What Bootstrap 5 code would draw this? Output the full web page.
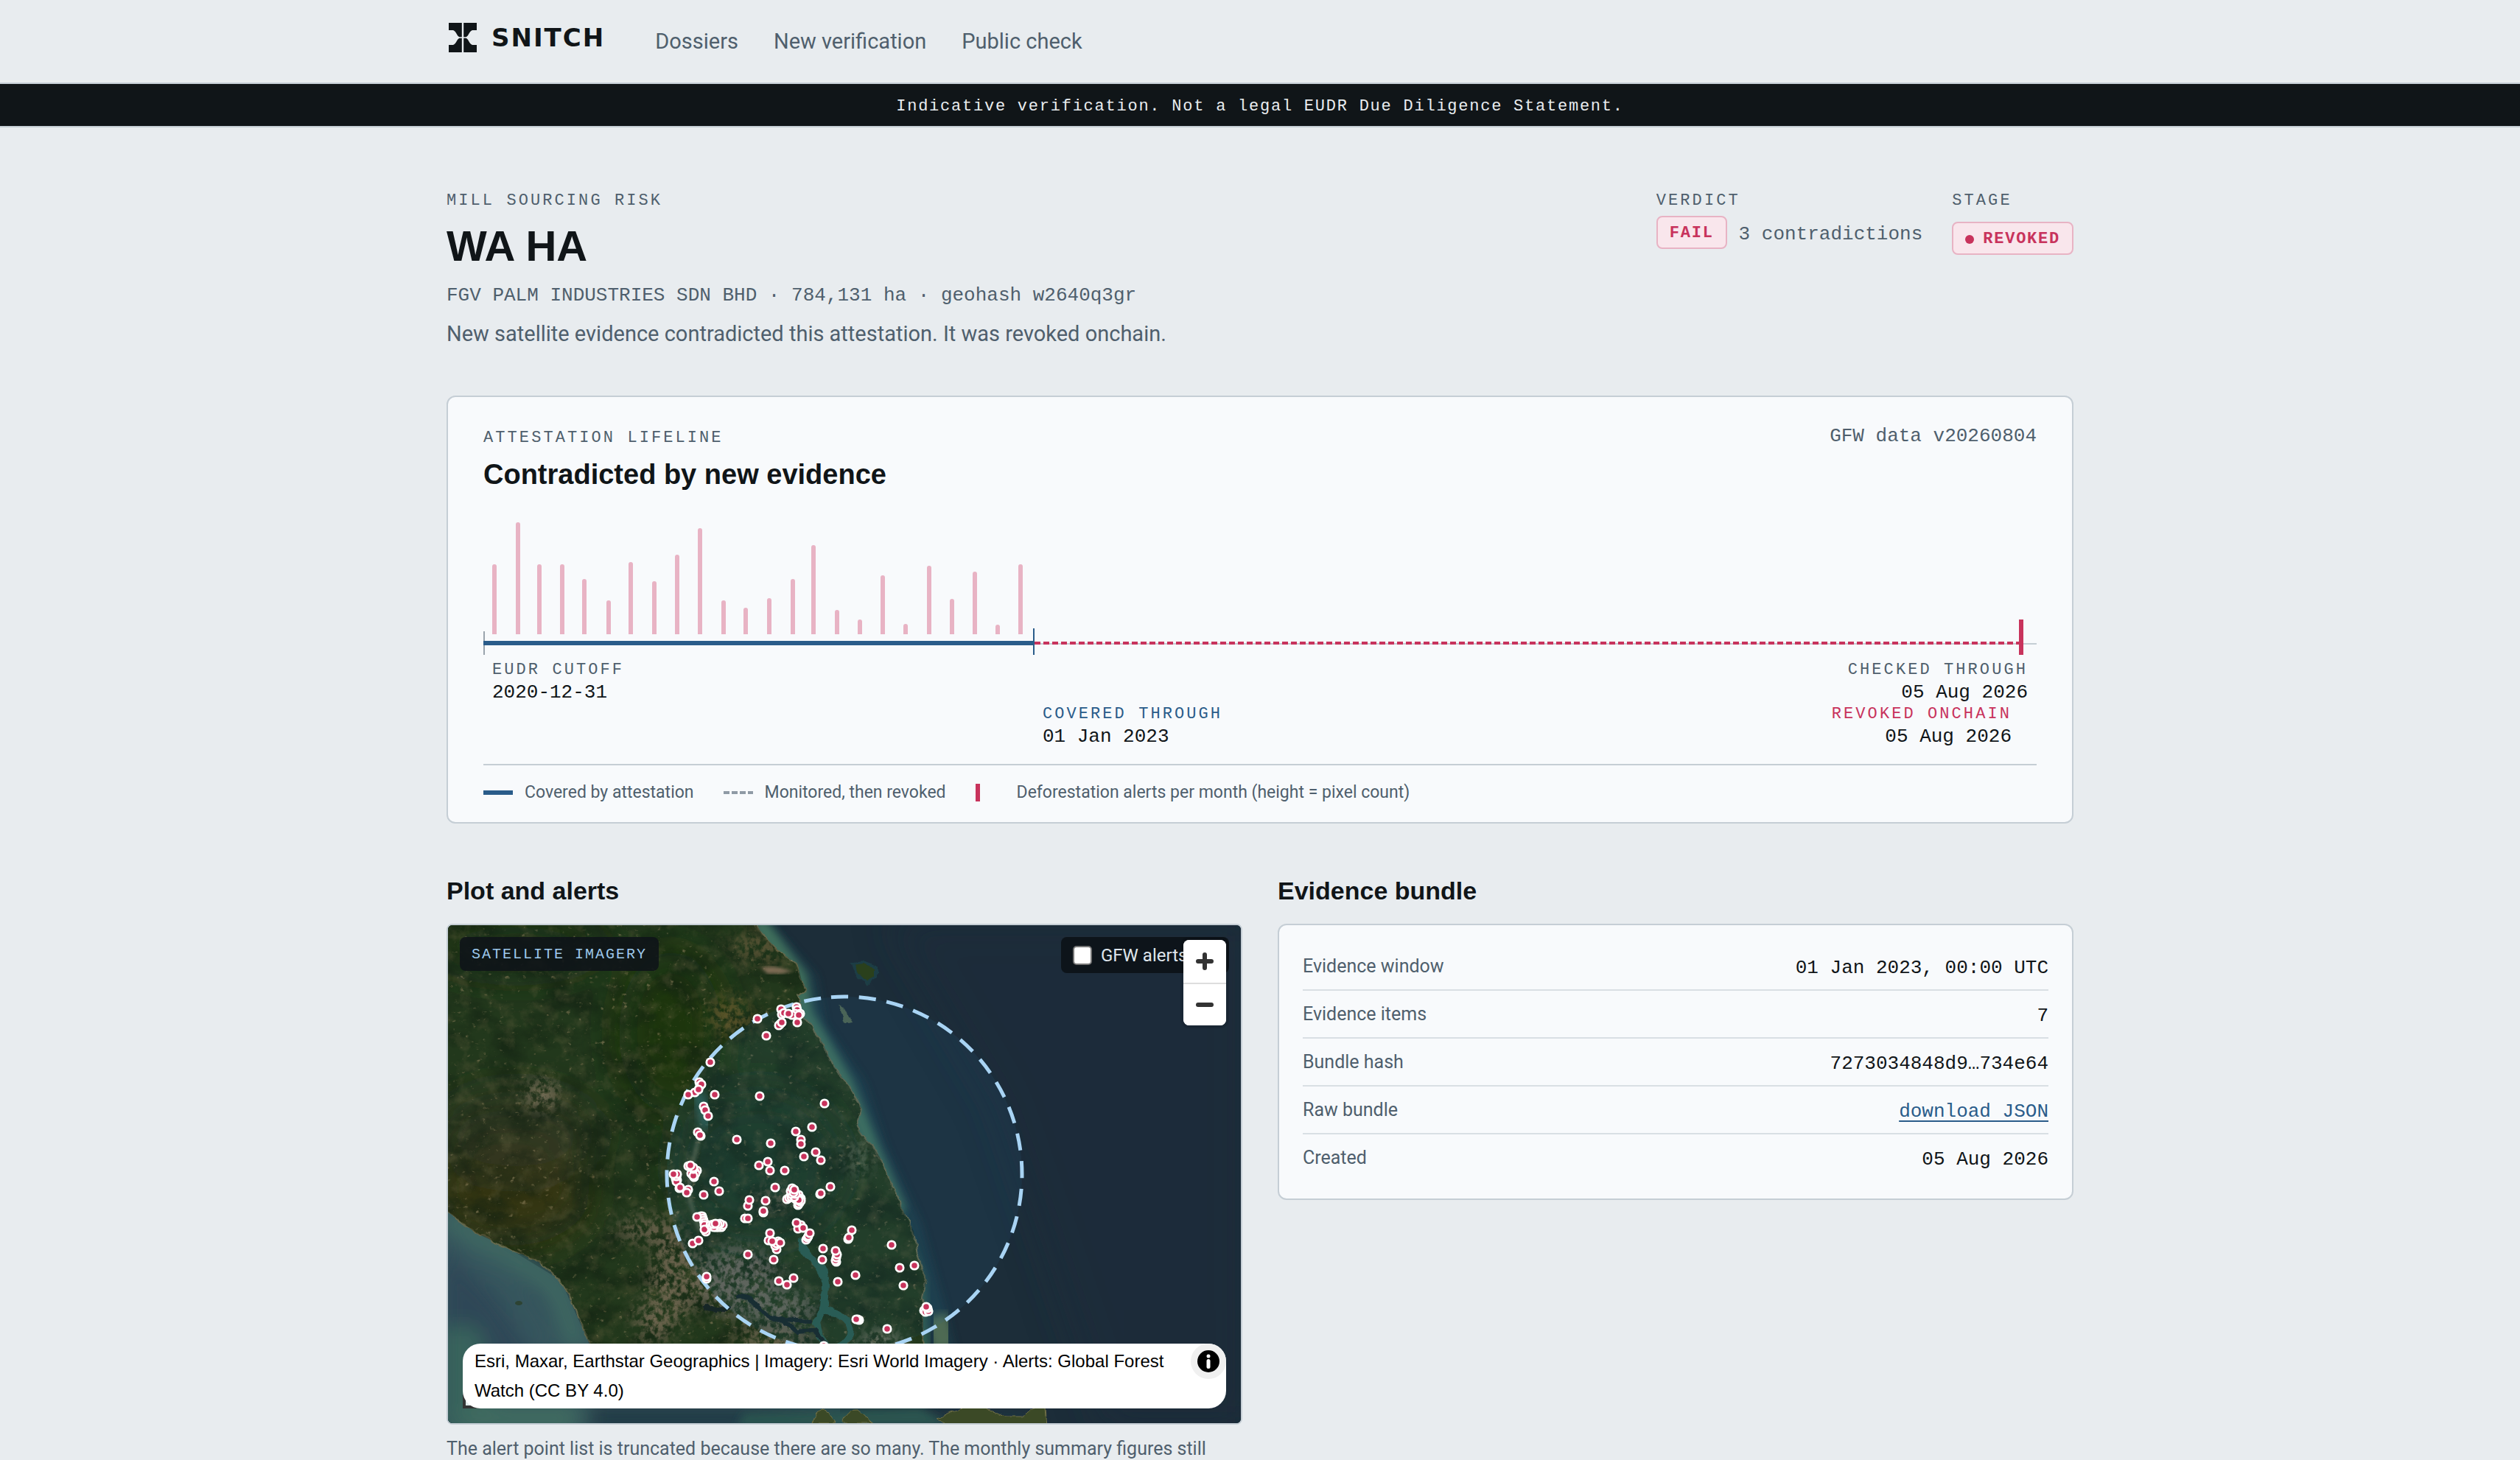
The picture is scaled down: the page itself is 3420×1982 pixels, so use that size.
<!DOCTYPE html>
<html lang="en">
<head>
<meta charset="utf-8">
<meta name="viewport" content="width=device-width, initial-scale=1">
<title>WA HA – Snitch</title>
<link href="https://cdn.jsdelivr.net/npm/bootstrap@5.3.0/dist/css/bootstrap.min.css" rel="stylesheet">
<style>
:root{--ink:#101518;--muted-ink:#4f5f6d;--line:#c5ced5;--paper:#f8fafc;--blue:#2a5c8a;--red:#c8335c;--pink:#e8b3c4;--blush:#f9e6ec}
body{background:#e8ecef;color:var(--ink);font-family:Roboto,"Open Sans",sans-serif;font-size:29px;line-height:44px;overflow-x:hidden}
.page-wrap{max-width:2304px;padding-left:48px;padding-right:48px}
.mono{font-family:"Liberation Mono","DejaVu Sans Mono",monospace;font-size:26px;line-height:26px;padding-top:4px}
.tag-label{font-family:"Liberation Mono","DejaVu Sans Mono",monospace;font-size:22px;line-height:32px;padding-top:4px;letter-spacing:.14em;text-transform:uppercase;color:var(--muted-ink)}
.soft{color:var(--muted-ink)}
h1,h2,.h-card{font-family:"Liberation Sans",Arial,sans-serif;font-weight:700}
.site-head{border-bottom:2px solid var(--line);height:114px;--bs-navbar-padding-y:0}
.site-brand{display:flex;align-items:center;gap:20px;padding:0 0 10px;margin-right:68px;font-family:"DejaVu Sans",sans-serif;font-weight:700;font-size:34px;line-height:44px;letter-spacing:2px;color:var(--ink)}
.site-brand svg{width:38px;height:40px;margin-left:3px}
.site-nav{gap:48px}
.site-nav .nav-link{padding:0!important;color:var(--muted-ink);font-size:29px}
.notice{background:var(--ink);color:#e8ecef;border-bottom:2px solid var(--line);font-family:"Liberation Mono",monospace;font-size:22px;line-height:53px;padding-top:4px;letter-spacing:.08em}
main{padding-top:80px}
h1{font-size:58px;line-height:66px;margin:12px 0}
.firm{line-height:36px;margin-bottom:12px}
.verdicts{gap:40px}
.chip{display:inline-flex;align-items:center;gap:12px;height:45px;padding:2px 16px 0;border:2px solid var(--pink);border-radius:8px;background:var(--blush);color:var(--red);font-family:"Liberation Mono",monospace;font-weight:700;font-size:22px;letter-spacing:.08em}
.chip i{width:12px;height:12px;border-radius:50%;background:var(--red)}
.panel{background:var(--paper);border:2px solid var(--line);border-radius:12px}
.life{margin-top:62px;padding:36px 48px 22px}
.h-card{font-size:38px;line-height:48px;margin:9px 0 30px}
.life svg{display:block;width:100%;height:auto}
.ticks{padding-top:4px}
.ticks .tag-label{line-height:26px}
.tick-row{padding:0 12px}
.tick-row.lower{padding:0 34px 0 36%}
.tag-label.is-blue{color:var(--blue)}
.tag-label.is-red{color:var(--red)}
.legend-row{border-top:2px solid var(--line);margin-top:24px;padding-top:19px;gap:40px;font-size:23px;line-height:36px}
.legend-row span{display:flex;align-items:center;gap:16px}
.legend-row i{width:40px;display:block}
.k-blue{height:6px;background:var(--blue)}
.k-dash{height:4px;background:repeating-linear-gradient(90deg,#8f9aa5 0 8px,transparent 8px 11px)}
.k-bar{height:24px;background:linear-gradient(var(--red),var(--red)) left/6px 100% no-repeat}
.cols{--bs-gutter-x:48px;margin-top:69px}
h2{font-size:34px;line-height:44px;margin-bottom:23px}
.map-box{position:relative;height:680px;border:2px solid var(--line);border-radius:8px;overflow:hidden;background:#1c2e3a}
.map-box>svg{position:absolute;inset:0;width:100%;height:100%}
.map-tag{position:absolute;left:16px;top:16px;padding:2px 16px 0;border-radius:8px;background:rgba(14,20,24,.9);color:#9ec9ec;font-family:"Liberation Mono",monospace;font-size:20px;line-height:44px;letter-spacing:.1em}
.map-toggle{position:absolute;right:16px;top:16px;width:228px;height:49px;padding-left:16px;gap:12px;border-radius:8px;background:rgba(12,18,24,.92);color:#dfe6ec;font-size:24px}
.map-toggle input{appearance:none;width:26px;height:26px;border:2px solid #767676;border-radius:5px;background:#fff}
.zoomer{position:absolute;right:20px;top:20px;width:58px;border-radius:8px;overflow:hidden;background:#fff;box-shadow:0 0 0 4px rgba(0,0,0,.1)}
.zoomer button{display:block;width:58px;height:58px;border:0;background:#fff;padding:0}
.zoomer button+button{border-top:2px solid #ddd}
.zoomer svg{width:24px;height:24px;display:block;margin:auto}
.scale-corner{position:absolute;left:20px;bottom:20px;width:60px;height:20px;background:#dfe8e8;border:solid #333;border-width:0 0 4px 4px}
.credit{position:absolute;left:20px;right:20px;bottom:20px;padding:4px 80px 4px 16px;border-radius:24px;background:#fff;color:#000;font-family:"Liberation Sans",Arial,sans-serif;font-size:24px;line-height:40px}
.credit button{position:absolute;right:0;top:0;width:48px;height:48px;border:0;border-radius:50%;background:#f0f0f0;padding:9px}
.credit button svg{display:block;width:30px;height:30px}
.caption{font-size:25px;line-height:36px;margin-top:15px}
.facts{padding:24px 32px;margin:0}
.facts div{height:65px;border-bottom:2px solid #d9dfe4}
.facts div:last-child{border:0;height:63px}
.facts dt{font-weight:400;font-size:25px}
.facts dd{margin:0}
.facts a{color:var(--blue);text-decoration-thickness:2px;text-underline-offset:5px}
</style>
<script defer src="https://cdn.jsdelivr.net/npm/bootstrap@5.3.0/dist/js/bootstrap.bundle.min.js"></script>
</head>
<body>
<header class="navbar site-head">
  <div class="container-fluid page-wrap justify-content-start">
    <a class="navbar-brand site-brand" href="#">
      <svg viewBox="0 0 38 40" fill="#101518" aria-hidden="true"><path d="M0 0H17.8V19.2H14.5C11 18 10 11 6 10H0ZM20.2 0H38V10H32C28 11 27 18 23.500 19.200H20.200ZM0 40H17.800V20.800H14.500C11 22 10 29 6 30H0ZM20.200 40H38V30H32C28 29 27 22 23.500 20.800H20.200Z"/></svg>
      SNITCH</a>
    <nav class="nav site-nav">
      <a class="nav-link" href="#">Dossiers</a>
      <a class="nav-link" href="#">New verification</a>
      <a class="nav-link" href="#">Public check</a>
    </nav>
  </div>
</header>
<div class="notice text-center">Indicative verification. Not a legal EUDR Due Diligence Statement.</div>

<main class="container-fluid page-wrap">
  <section class="d-flex justify-content-between">
    <div>
      <div class="tag-label">Mill sourcing risk</div>
      <h1>WA HA</h1>
      <div class="mono soft firm">FGV PALM INDUSTRIES SDN BHD · 784,131 ha · geohash w2640q3gr</div>
      <p class="soft mb-0">New satellite evidence contradicted this attestation. It was revoked onchain.</p>
    </div>
    <div class="d-flex verdicts">
      <div>
        <div class="tag-label">Verdict</div>
        <div class="d-flex align-items-center gap-3 pt-1"><span class="chip">FAIL</span><span class="mono soft">3 contradictions</span></div>
      </div>
      <div>
        <div class="tag-label mb-2">Stage</div>
        <span class="chip mt-1"><i></i>REVOKED</span>
      </div>
    </div>
  </section>

  <section class="panel life">
    <div class="d-flex justify-content-between">
      <div class="tag-label">Attestation lifeline</div>
      <div class="mono soft">GFW data v20260804</div>
    </div>
    <div class="h-card">Contradicted by new evidence</div>
    <svg viewBox="0 0 2108 191" role="img" aria-label="Monthly alerts and attestation coverage">
      <g id="bars" fill="#e8b3c4"></g>
      <rect y="175" width="2108" height="2" fill="#c5ced5"/>
      <rect y="159" width="2" height="32" fill="#9aa4ad"/>
      <rect y="172" width="747" height="6" fill="#2a5c8a"/>
      <path d="M748 175H2087" stroke="#c8335c" stroke-width="4" stroke-dasharray="8 4"/>
      <rect x="746" y="155" width="2" height="36" fill="#2a5c8a"/>
      <rect x="2084" y="143" width="6" height="48" fill="#c8335c"/>
    </svg>
    <div class="ticks">
      <div class="d-flex justify-content-between tick-row">
        <div><div class="tag-label">EUDR cutoff</div><div class="mono">2020-12-31</div></div>
        <div class="text-end"><div class="tag-label">Checked through</div><div class="mono">05 Aug 2026</div></div>
      </div>
      <div class="d-flex justify-content-between tick-row lower">
        <div><div class="tag-label is-blue">Covered through</div><div class="mono">01 Jan 2023</div></div>
        <div class="text-end"><div class="tag-label is-red">Revoked onchain</div><div class="mono">05 Aug 2026</div></div>
      </div>
    </div>
    <div class="d-flex legend-row soft">
      <span><i class="k-blue"></i>Covered by attestation</span>
      <span><i class="k-dash"></i>Monitored, then revoked</span>
      <span><i class="k-bar"></i>Deforestation alerts per month (height = pixel count)</span>
    </div>
  </section>

  <section class="row cols">
    <div class="col-6">
      <h2>Plot and alerts</h2>
      <div class="map-box">
        <svg viewBox="608 1255 1076 676" preserveAspectRatio="xMidYMid slice" role="img" aria-label="Satellite map with alert points">
          <defs>
            <filter id="blur2"><feGaussianBlur stdDeviation="2"/></filter>
            <filter id="blur6" x="-20%" y="-20%" width="140%" height="140%"><feGaussianBlur stdDeviation="6"/></filter>
            <filter id="blur14" x="-30%" y="-30%" width="160%" height="160%"><feGaussianBlur stdDeviation="14"/></filter>
            <filter id="blur30" x="-50%" y="-50%" width="200%" height="200%"><feGaussianBlur stdDeviation="26"/></filter>
            <filter id="rough" x="-5%" y="-5%" width="110%" height="110%"><feTurbulence type="fractalNoise" baseFrequency=".06" numOctaves="3" seed="4"/><feDisplacementMap in="SourceGraphic" scale="9" xChannelSelector="R" yChannelSelector="G"/></filter>
            <filter id="dark" x="0" y="0" width="100%" height="100%" color-interpolation-filters="sRGB"><feTurbulence type="fractalNoise" baseFrequency=".018 .024" numOctaves="6" seed="7"/><feColorMatrix values="0 0 0 0 .07  0 0 0 0 .13  0 0 0 0 .07  3 0 0 0 -1.250"/></filter>
            <filter id="tan" x="0" y="0" width="100%" height="100%" color-interpolation-filters="sRGB"><feTurbulence type="fractalNoise" baseFrequency=".05" numOctaves="6" seed="21"/><feColorMatrix values="0 0 0 0 .38  0 0 0 0 .37  0 0 0 0 .24  0 3 0 0 -1.500"/></filter>
            <filter id="speck" x="0" y="0" width="100%" height="100%" color-interpolation-filters="sRGB"><feTurbulence type="fractalNoise" baseFrequency=".13 .17" numOctaves="4" seed="35"/><feColorMatrix values=".25 0 0 0 .42  .25 0 0 0 .36  .25 0 0 0 .22  0 3 4 0 -4.400"/></filter>
            <filter id="town" x="-30%" y="-30%" width="160%" height="160%" color-interpolation-filters="sRGB"><feGaussianBlur in="SourceGraphic" stdDeviation="12" result="b"/><feTurbulence type="fractalNoise" baseFrequency=".13 .11" numOctaves="5" seed="11"/><feColorMatrix values="0 0 0 0 0 0 0 0 0 0 0 0 0 0 0 0 4 0 0 -1.500" result="n"/><feComposite in="b" in2="n" operator="in"/></filter>
            <path id="landShape" d="M600 1245H1020L1035 1268 1057 1290 1082 1307 1088 1330 1095 1343 1082 1350 1091 1380 1114 1410 1129 1443 1157 1480 1169 1503 1162 1525 1170 1542 1183 1553 1194 1570 1208 1600 1224 1640 1240 1670 1245 1703 1258 1737 1252 1760 1254 1840H806L800 1823 793 1807 779 1770 761 1737 732 1713 689 1693 646 1673 600 1638Z"/>
            <clipPath id="landClip"><use href="#landShape"/></clipPath>
          </defs>
          <rect x="600" y="1245" width="1100" height="700" fill="#1c2d39"/>
          <path d="M1200 1245L1700 1245V1940H1500L1350 1500Z" fill="#1b2b3b" opacity=".5" filter="url(#blur30)"/>
          <g fill="none" stroke-linejoin="round">
            <path d="M1035 1262L1094 1330 1105 1395 1160 1475 1188 1560 1236 1665 1268 1780 1285 1850" stroke="#1c3f4c" stroke-width="30" filter="url(#blur6)" opacity=".7"/>
            <path d="M1028 1250L1084 1325 1092 1375 1147 1470 1177 1545 1220 1645" stroke="#3f705c" stroke-width="22" filter="url(#blur6)"/>
            <path d="M1210 1640L1246 1737 1254 1840" stroke="#33604f" stroke-width="18" filter="url(#blur6)"/>
            <path d="M1270 1785L1284 1830" stroke="#5f7a58" stroke-width="34" filter="url(#blur6)" opacity=".75"/>
          </g>
          <path d="M600 1638L689 1693 761 1737 800 1823 1140 1840V1940H600Z" fill="#34525b"/>
          <g filter="url(#blur14)">
            <path d="M600 1650L690 1700 755 1745 785 1830" fill="none" stroke="#426f64" stroke-width="22"/>
            <path d="M600 1690L670 1760 730 1850H600Z" fill="#2f4656"/>
            <path d="M620 1690L690 1740 740 1830" fill="none" stroke="#38595f" stroke-width="18"/>
            <path d="M600 1800H650L680 1940H600Z" fill="#37635b"/>
            <path d="M640 1905H790L780 1945H620Z" fill="#416c61"/>
            <path d="M800 1905H1000L1400 1925V1945H800Z" fill="#213b44"/>
          </g>
          <path d="M1010 1918L1250 1910 1290 1935H1000Z" fill="#2b5450" filter="url(#blur6)"/>
          <g filter="url(#rough)">
            <use href="#landShape" fill="#24381c" stroke="#66694d" stroke-width="2"/>
            <path d="M1158 1309L1172 1307 1188 1313 1188 1325 1175 1334 1162 1321Z" fill="#2c3f1c" stroke="#1c3e44" stroke-width="4"/>
            <path d="M1139 1361L1145 1365 1155 1386 1147 1388Z" fill="#4f6350"/>
            <path d="M1102 1931Q1107 1914 1120 1912L1134 1931ZM1143 1931Q1150 1912 1165 1914L1186 1931ZM1270 1924L1305 1912 1325 1906 1362 1922 1390 1922 1400 1910 1418 1910 1420 1935H1290Z" fill="#3a4a26" stroke="#716f46" stroke-width="1"/>
          </g>
          <ellipse cx="704" cy="1768" rx="5" ry="3" fill="#2d4333"/>
          <g clip-path="url(#landClip)">
            <g filter="url(#blur30)">
              <ellipse cx="690" cy="1620" rx="110" ry="70" fill="#383614" opacity=".8"/>
              <ellipse cx="700" cy="1540" rx="110" ry="60" fill="#343822" opacity=".7"/>
              <ellipse cx="910" cy="1400" rx="70" ry="110" fill="#1d350f"/>
              <ellipse cx="1030" cy="1580" rx="110" ry="100" fill="#1f3923"/>
              <ellipse cx="700" cy="1280" rx="120" ry="40" fill="#1f3314"/>
            </g>
            <rect x="600" y="1245" width="700" height="600" filter="url(#dark)" opacity=".6"/>
            <rect x="600" y="1245" width="700" height="600" filter="url(#tan)" opacity=".35"/>
            <rect x="600" y="1245" width="700" height="600" filter="url(#speck)" opacity=".55"/>
            <g filter="url(#town)" fill="#796c57" opacity=".8">
              <ellipse cx="1000" cy="1738" rx="58" ry="48" fill="#787066"/>
              <ellipse cx="915" cy="1735" rx="36" ry="60"/>
              <ellipse cx="1060" cy="1775" rx="50" ry="25" fill="#746f64"/>
              <ellipse cx="880" cy="1668" rx="48" ry="18"/>
              <ellipse cx="735" cy="1485" rx="24" ry="22" fill="#8d7e68"/>
              <ellipse cx="1050" cy="1818" rx="60" ry="18"/>
              <ellipse cx="890" cy="1790" rx="30" ry="34"/>
              <ellipse cx="1165" cy="1570" rx="18" ry="24" fill="#606a52"/>
              <ellipse cx="1195" cy="1822" rx="28" ry="14" fill="#a99d8b"/>
              <ellipse cx="1050" cy="1625" rx="26" ry="14"/>
              <ellipse cx="990" cy="1378" rx="32" ry="26" fill="#6a5d30"/>
              <ellipse cx="1030" cy="1285" rx="40" ry="20" fill="#675c3c"/>
            </g>
            <path d="M1033 1312L1052 1311 1076 1317 1062 1321 1041 1321Z" fill="#9b7f68" opacity=".75" filter="url(#blur2)"/>
            <path d="M945 1480Q955 1500 958 1530" fill="none" stroke="#2f5e52" stroke-width="16" filter="url(#blur6)"/>
            <path d="M948 1545Q940 1575 936 1600T950 1670" fill="none" stroke="#7d8069" stroke-width="5" opacity=".5" filter="url(#blur2)"/>
            <g fill="none" stroke-linecap="round" stroke-linejoin="round" filter="url(#rough)">
              <path d="M1087 1685Q1090 1700 1105 1710T1120 1747L1118 1773 1108 1795 1112 1812 1125 1830M1120 1778Q1150 1785 1154 1800T1138 1828" stroke="#2c5a4d" stroke-width="10"/>
              <path d="M957 1773L972 1779 989 1772M1001 1760Q1020 1760 1034 1777T1061 1790L1082 1808 1105 1806 1118 1820M1062 1790L1100 1792" stroke="#182528" stroke-width="6"/>
            </g>
          </g>
          <circle cx="1146" cy="1593" r="241" fill="#266c98" fill-opacity=".12"/>
          <circle cx="1146" cy="1593" r="241" fill="none" stroke="#a9d4f4" stroke-width="5" stroke-dasharray="23.200 14.660" transform="rotate(-94.300 1146 1593)"/>
          <g id="alerts" fill="#c8335c" stroke="#fff" stroke-width="2.800"></g>
        </svg>
        <div class="map-tag">SATELLITE IMAGERY</div>
        <label class="map-toggle d-flex align-items-center"><input type="checkbox">GFW alerts</label>
        <div class="zoomer">
          <button type="button" aria-label="Zoom in"><svg viewBox="0 0 24 24" stroke="#333" stroke-width="6" stroke-linecap="round"><path d="M12 3V21M3 12H21"/></svg></button>
          <button type="button" aria-label="Zoom out"><svg viewBox="0 0 24 24" stroke="#333" stroke-width="6" stroke-linecap="round"><path d="M3 12H21"/></svg></button>
        </div>
        <div class="scale-corner"></div>
        <div class="credit">Esri, Maxar, Earthstar Geographics | Imagery: Esri World Imagery · Alerts: Global Forest Watch (CC BY 4.0)
          <button type="button" aria-label="Toggle attribution"><svg viewBox="0 0 30 30"><circle cx="15" cy="15" r="15"/><circle cx="15" cy="8" r="2.500" fill="#fff"/><path d="M15 14.500V22.500" stroke="#fff" stroke-width="5" stroke-linecap="round"/></svg></button>
        </div>
      </div>
      <p class="caption soft mb-0">The alert point list is truncated because there are so many. The monthly summary figures still</p>
    </div>
    <div class="col-6">
      <h2>Evidence bundle</h2>
      <dl class="panel facts">
        <div class="d-flex justify-content-between align-items-center"><dt class="soft">Evidence window</dt><dd class="mono">01 Jan 2023, 00:00 UTC</dd></div>
        <div class="d-flex justify-content-between align-items-center"><dt class="soft">Evidence items</dt><dd class="mono">7</dd></div>
        <div class="d-flex justify-content-between align-items-center"><dt class="soft">Bundle hash</dt><dd class="mono">7273034848d9…734e64</dd></div>
        <div class="d-flex justify-content-between align-items-center"><dt class="soft">Raw bundle</dt><dd class="mono"><a href="#">download JSON</a></dd></div>
        <div class="d-flex justify-content-between align-items-center"><dt class="soft">Created</dt><dd class="mono">05 Aug 2026</dd></div>
      </dl>
    </div>
  </section>
</main>
<script>
// monthly alert bars: [x, height]
const months=[[15,95],[47,152],[76,95],[107,95],[137,75],[170,46],[200,98],[232,72],[263,108],[294,144],[326,46],[356,36],[388,49],[420,75],[448,121],[480,33],[511,20],[542,80],[573,14],[605,93],[636,48],[667,85],[698,13],[729,95]];
document.getElementById('bars').innerHTML=months.map(([x,h])=>`<path d="M${x-3} 163V${163-h+3}q0-3 3-3t3 3V163Z"/>`).join('');
// alert pins on the map canvas
const pins=`1028,1382 1040,1405 1060,1369 1081,1366 1082,1370 1061,1376 1086,1375 1079,1375 1075,1377 1064,1374 1084,1377 1070,1375 1059,1389 1057,1391 1061,1387 1082,1387
964,1441 949,1468 950,1473 952,1471 943,1482 948,1478 934,1485 970,1485 1031,1487 1119,1497 955,1501 957,1506 961,1514 947,1536 951,1541 950,1540 1000,1546 1046,1551 1102,1529 1080,1535 1087,1546 1087,1552 1091,1569 1107,1563 1114,1574 1042,1576 1030,1581
942,1597 940,1594 946,1588 943,1590 938,1592 944,1592 941,1595 941,1586 934,1582 941,1584 937,1581 919,1601 917,1599 918,1603 918,1596 919,1593 914,1593 922,1612 923,1611 934,1614 932,1618 955,1621 969,1603 976,1616 1045,1588 1065,1588 1052,1611 1015,1636 1017,1628 1039,1629 1036,1645 1036,1643 1011,1653 1015,1653
1068,1627 1071,1625 1074,1624 1084,1621 1087,1626 1086,1628 1083,1635 1085,1632 1083,1630 1080,1627 1084,1633 1086,1630 1082,1628 1087,1629 1084,1628 1078,1624 1074,1620 1080,1620 1073,1616 1077,1618 1075,1612 1078,1614 1113,1620 1114,1619 1127,1610
951,1650 953,1650 954,1653 955,1656 956,1659 956,1662 958,1671 956,1668 964,1662 966,1664 975,1665 972,1665 979,1665 981,1662 977,1660 974,1664 969,1665 968,1661 974,1661 971,1660 946,1651 940,1687 948,1683 1015,1702 959,1735 959,1732
1087,1662 1083,1667 1081,1659 1090,1666 1094,1682 1096,1679 1097,1677 1099,1673 1043,1683 1045,1673 1054,1695 1052,1690 1056,1684 1054,1687 1048,1684 1059,1686 1050,1709 1117,1694 1116,1709 1135,1712 1134,1710 1135,1706 1136,1702 1134,1697 1057,1738 1068,1743 1077,1734 1137,1739
1156,1669 1151,1681 1152,1679 1161,1730 1210,1689 1221,1720 1241,1717 1226,1744 1254,1778 1256,1780 1260,1779 1259,1775 1257,1773 1166,1791 1164,1790 1162,1790 1204,1803 1118,1826`.split(/\s+/);
document.getElementById('alerts').innerHTML=pins.map(p=>{const[x,y]=p.split(',');return`<circle cx="${x}" cy="${y}" r="5.200"/>`}).join('');
</script>
</body>
</html>
